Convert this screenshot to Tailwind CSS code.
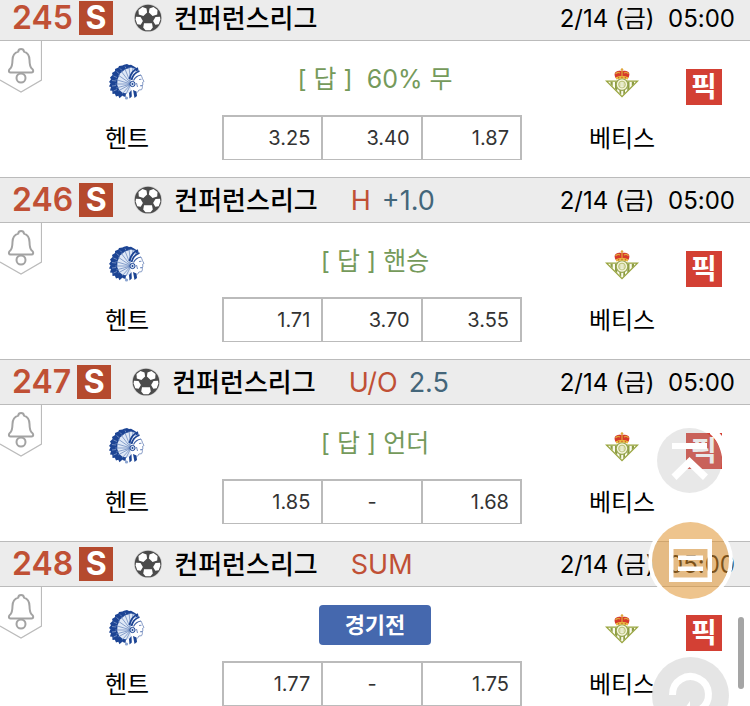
<!DOCTYPE html>
<html lang="ko">
<head>
    <meta charset="UTF-8">
    <meta name="viewport" content="width=device-width, initial-scale=1.0">
    <title>컨퍼런스리그</title>
    <script src="https://cdn.jsdelivr.net/npm/@tailwindcss/browser@4"></script>
</head>
<body class="h-screen overflow-hidden bg-white font-['Inter','Noto_Sans_CJK_KR',sans-serif] text-black">

    <!-- 아이콘 모음 -->
    <svg class="hidden">
        <symbol id="ball" viewBox="0 0 28 28">
            <circle cx="14" cy="14" r="14" fill="#cfcfcf"/>
            <circle cx="14" cy="14" r="13.300" fill="#4b4b4b"/>
            <g fill="#fff">
                <path d="M4.500 6L8.500 3l4 1.500.6 4-3.700 3.500-4.600-1.500z"/>
                <path d="M23.500 6L19.500 3l-4 1.500-.6 4 3.700 3.500 4.600-1.500z"/>
                <path d="M2 12.800L6.500 13l2.400 4-2.200 3.800-3.400-.6L1.600 15.500z"/>
                <path d="M26 12.800L21.500 13l-2.400 4 2.200 3.800 3.400-.6 1.700-4.700z"/>
                <path d="M10 19.300h8l.8 4.200-2.300 2.700h-5l-2.300-2.700z"/>
            </g>
        </symbol>

        <symbol id="bell" viewBox="0 0 42 54">
            <path d="M41.500 0v39L21 51 0 39" fill="none" stroke="#bbb" stroke-width="1.200"/>
            <path d="M10.500 31.500h21c1.200 0 1.700-.7 1.700-1.700 0-1.400-.9-1.900-1.700-2.600-1.700-1.700-1.900-4.200-2-8.200-.1-4.700-1.800-7.300-5.500-8.400-.2-1.700-1.200-2.500-2.900-2.500s-2.700.8-2.900 2.500c-3.800 1.100-5.600 3.700-5.700 8.400-.1 4-.3 6.500-2 8.200-.8.7-1.600 1.200-1.600 2.600 0 1 .500 1.700 1.600 1.700z" fill="none" stroke="#a3a3a3" stroke-width="2"/>
            <circle cx="21" cy="37" r="4.500" fill="#fff" stroke="#a3a3a3" stroke-width="2"/>
        </symbol>

        <symbol id="gent" viewBox="0 0 36 36">
            <path d="M26 3L22 .8 20 1 18 0l-3 .8-1.500.7L10 2l-.6 1.500L6 5l.1 2L3 9l.6 2L1 13.500l1 1.700L0 18l1.500 1.200L0 22.500l2 .6L1 26.500l2.300.2L3.500 30l2.400-.3L7 32.500l2.300-.8 1.200 2.600 2.500-2.300L21 27l5-12 4-9z" fill="#1c4494"/>
            <path d="M27 5L22 3.500l-6 2-5 4-2.500 6L8.200 21l2 5 4.300 3.500 6.500-.5 3-6z" fill="#dfe8f6"/>
            <path d="M22 20L7 24M22 20L6 20M22 20L6.500 15.500M22 20L9 11M22 20L12 7M22 20L16 5M22 20L20 3M22 20L24 3.500M22 20L9 27M22 20L13 30M22 20L17 30" stroke="#5f80b9" stroke-width=".7"/>
            <path d="M7 17L3 16.500M7 21.500L3 22M8 13.500L4.500 12M10 9.500L7.500 7.500M13 6.500L11 4.500M17 4.500L16 2.500M8 25.500L4.500 27" stroke="#9fb4d8" stroke-width=".6"/>
            <path d="M22 14c1-4 4-7 8-7.500 1.500 1.500 3 3.500 3.500 6l1.800 5-1.500 1 .4 3-.8 3.500-3.600 1.500-1 3h-6l-1.500-9z" fill="#fff"/>
            <path d="M20.500 15c1-5 4-9 8.500-11M22.500 16c1-4 3.500-7.500 8-9" fill="none" stroke="#1c4494" stroke-width="1.800"/>
            <path d="M24.500 16.500c1.500-3 4-5 7.500-5.500" fill="none" stroke="#3d60a6" stroke-width="1.100"/>
            <path d="M32 11c1.300 2.500 1.500 4.200 3 6.500l-1.500.9.500 2.200-.9.600.3 2.500-.8 2-2.700.3-1.500 2.500" fill="none" stroke="#7890c0" stroke-width=".9"/>
            <path d="M30 15.500l2.500-.3M31 21.800l2.500-.3M27.500 19l1 4" stroke="#4c6cad" stroke-width=".8"/>
            <circle cx="23.500" cy="20" r="2.600" fill="#dbe5f4" stroke="#1c4494" stroke-width="1"/>
            <circle cx="23.500" cy="20" r=".9" fill="#1c4494"/>
            <path d="M14 29l3 .5-.5 3.500-3-1zM20 29l2.500-3 .3 6.500-2.300 2zM24 26l3.500 1.500.5 4.500-2.500 2z" fill="#1c4494"/>
            <circle cx="17.500" cy="34" r="1.600" fill="#8ba4d0"/>
        </symbol>

        <symbol id="betis" viewBox="0 0 34 30">
            <path d="M0 12.500h34L17 29.500z" fill="#97a43d"/>
            <path d="M3 13.700h28L17 27.700z" fill="#fbfbee"/>
            <path d="M5.500 13.700h2.200v4.600l-2.200-2.200zM10 13.700h2.200v9.200L10 20.700zM14.500 13.700h1.700v13.100l-1.700-1.700zM18.300 13.700H20v11.400l-1.700 1.700zM22.300 13.700h2.200v7l-2.200 2.200zM26.800 13.700H29v2.400l-2.200 2.200z" fill="#8d9d45"/>
            <circle cx="17" cy="16.500" r="5.800" fill="#f5f5dc" stroke="#97a551" stroke-width="1.200"/>
            <circle cx="17" cy="16.500" r="3.400" fill="#d8dda9" stroke="#afb868" stroke-width=".8"/>
            <path d="M15.500 15h3M15.500 17h3M15.500 18.800h3" stroke="#fff" stroke-width=".8"/>
            <path d="M11 10.500C9.300 8 9 5 11 3.800c2-1.300 4.500-1 6-1.300 1.500.3 4 0 6 1.300 2 1.200 1.700 4.200 0 6.700-3.500-1.200-8.500-1.200-12 0z" fill="#d6392b"/>
            <path d="M17 0v9M15.700 1.500h2.600M10.500 6c1-1.500 3-2 4.500-1M23.500 6c-1-1.500-3-2-4.500-1" stroke="#dfa63a" stroke-width="1.200" fill="none"/>
            <path d="M10.800 9.300c3.500-1.600 8.900-1.600 12.400 0l-.5 2.200c-3.300-1.200-8.100-1.200-11.400 0z" fill="#e9ba3e"/>
            <path d="M13 9.800h1.200M16.400 9.300h1.200M19.800 9.800H21" stroke="#c9402d"/>
        </symbol>
    </svg>

    <!-- 경기 목록 -->
    <main id="gameList" class="-mt-[5px]"></main>

    <!-- 플로팅 버튼 -->
    <button type="button" aria-label="맨 위로" class="fixed right-[28px] top-[428px] size-[65px]">
        <svg viewBox="0 0 65 65" class="size-full">
            <circle cx="32.500" cy="32.500" r="32.500" fill="#b4b4b4" fill-opacity=".3"/>
            <path d="M15 15h35v6H15zM32.500 29L51 46.500 46 52 32.500 39 19.500 52 14.500 46.500z" fill="#fff"/>
            <path d="M53 5L65 5 65 29C63 18 59 11 53 6z" fill="#fff"/>
            <path d="M62.500 5H65v3z" fill="#d34034"/>
        </svg>
    </button>
    <button type="button" aria-label="목록" class="fixed right-[17px] top-[518px] size-[85px]">
        <svg viewBox="0 0 85 85" class="size-full">
            <circle cx="42.500" cy="42.500" r="40.500" fill="none" stroke="#fff" stroke-width="4"/>
            <circle cx="42.500" cy="42.500" r="38.500" fill="#e09430" fill-opacity=".55"/>
            <path fill-rule="evenodd" d="M21 21h43v43H21zM25.500 31v28.500h34V31z" fill="#fff"/>
            <path d="M30 37.500h25v4.500H30zM30 48.500h25v4.500H30z" fill="#fff"/>
        </svg>
    </button>
    <button type="button" aria-label="도움말" class="fixed right-[21px] top-[657px] size-[77px]">
        <svg viewBox="0 0 77 77" class="size-full">
            <circle cx="38.500" cy="38.500" r="38.500" fill="#e4e4e4" fill-opacity=".96"/>
            <path d="M20.500 38a18 18 0 1 1 28 14.500c-6 4-10 5-10 12" fill="none" stroke="#fff" stroke-width="7"/>
            <path d="M38 44v10h-7z" fill="#fff"/>
        </svg>
    </button>

    <!-- 스크롤 표시 -->
    <div class="fixed right-[6px] top-[617px] h-[72px] w-[6px] rounded-full bg-[#a5a5a5]"></div>

    <script>
        const games = [
            { no: 245, type: '', value: '', answer: '[ 답 ]&nbsp; 60% 무', odds: ['3.25', '3.40', '1.87'] },
            { no: 246, type: 'H', value: '+1.0', answer: '[ 답 ] 핸승', odds: ['1.71', '3.70', '3.55'] },
            { no: 247, type: 'U/O', value: '2.5', answer: '[ 답 ] 언더', odds: ['1.85', '-', '1.68'] },
            { no: 248, type: 'SUM', value: '', answer: '', odds: ['1.77', '-', '1.75'] }
        ];

        // 배당 칸
        function oddsCell(value) {
            const align = value === '-' ? 'text-center' : 'text-right';
            return `<td class="h-[43px] w-1/3 border-2 border-b border-[#bbb] px-[11px] text-xl leading-6 text-[#333] ${align}">${value}</td>`;
        }

        // 답이 없으면 경기전 버튼 표시
        function status(game) {
            if (game.answer) {
                return `<p class="text-[25px] leading-[40px] text-[#759a5b]">${game.answer}</p>`;
            }
            return `<button type="button" class="h-[40px] w-[112px] rounded bg-[#4568ae] text-[22px] font-bold text-white">경기전</button>`;
        }

        document.getElementById('gameList').innerHTML = games.map(game => `
            <section>
                <header class="flex h-[46px] items-center border-y border-[#bbb] bg-[#ececec] pl-[12px] pr-[15px]">
                    <span class="text-[32px] font-semibold leading-[40px] text-[#c05035]">${game.no}</span>
                    <span class="ml-[6px] size-[34px] bg-[#b54a2e] text-center text-[32px] font-bold leading-[34px] text-white">S</span>
                    <svg class="ml-[21px] size-[28px]"><use href="#ball"/></svg>
                    <h2 class="ml-[12px] pt-[2px] text-[26px] font-medium leading-[40px]">컨퍼런스리그</h2>
                    <span class="ml-[33px] pt-[2px] text-[27px] leading-[40px] text-[#c05035]">${game.type}</span>
                    <span class="ml-[11px] pt-[2px] text-[27px] leading-[40px] text-[#44667a]">${game.value}</span>
                    <time class="ml-auto whitespace-pre pt-[2px] text-2xl leading-[40px]">2/14 (금)  05:00</time>
                </header>
                <div class="flex h-[136px]">
                    <button type="button" aria-label="알림" class="h-[54px] w-[42px]"><svg class="size-full"><use href="#bell"/></svg></button>
                    <div class="flex w-[170px] flex-col items-center pt-[23px]">
                        <svg class="size-[36px]"><use href="#gent"/></svg>
                        <span class="mt-[21px] text-2xl leading-[36px]">헨트</span>
                    </div>
                    <div class="flex-1 pl-[10px] pr-[36px] pt-[18px]">
                        <div class="pl-[6px] text-center">${status(game)}</div>
                        <table class="mt-[16px] w-full border-collapse">
                            <tr>${game.odds.map(oddsCell).join('')}</tr>
                        </table>
                    </div>
                    <div class="flex w-[128px] flex-col items-center pt-[27px]">
                        <svg class="h-[30px] w-[34px]"><use href="#betis"/></svg>
                        <span class="mt-[23px] text-2xl leading-[36px]">베티스</span>
                    </div>
                    <div class="w-[64px] pt-[28px]">
                        <button type="button" class="size-[36px] bg-[#d34034] text-[28px] font-bold leading-[34px] text-white">픽</button>
                    </div>
                </div>
            </section>
        `).join('');
    </script>
</body>
</html>
